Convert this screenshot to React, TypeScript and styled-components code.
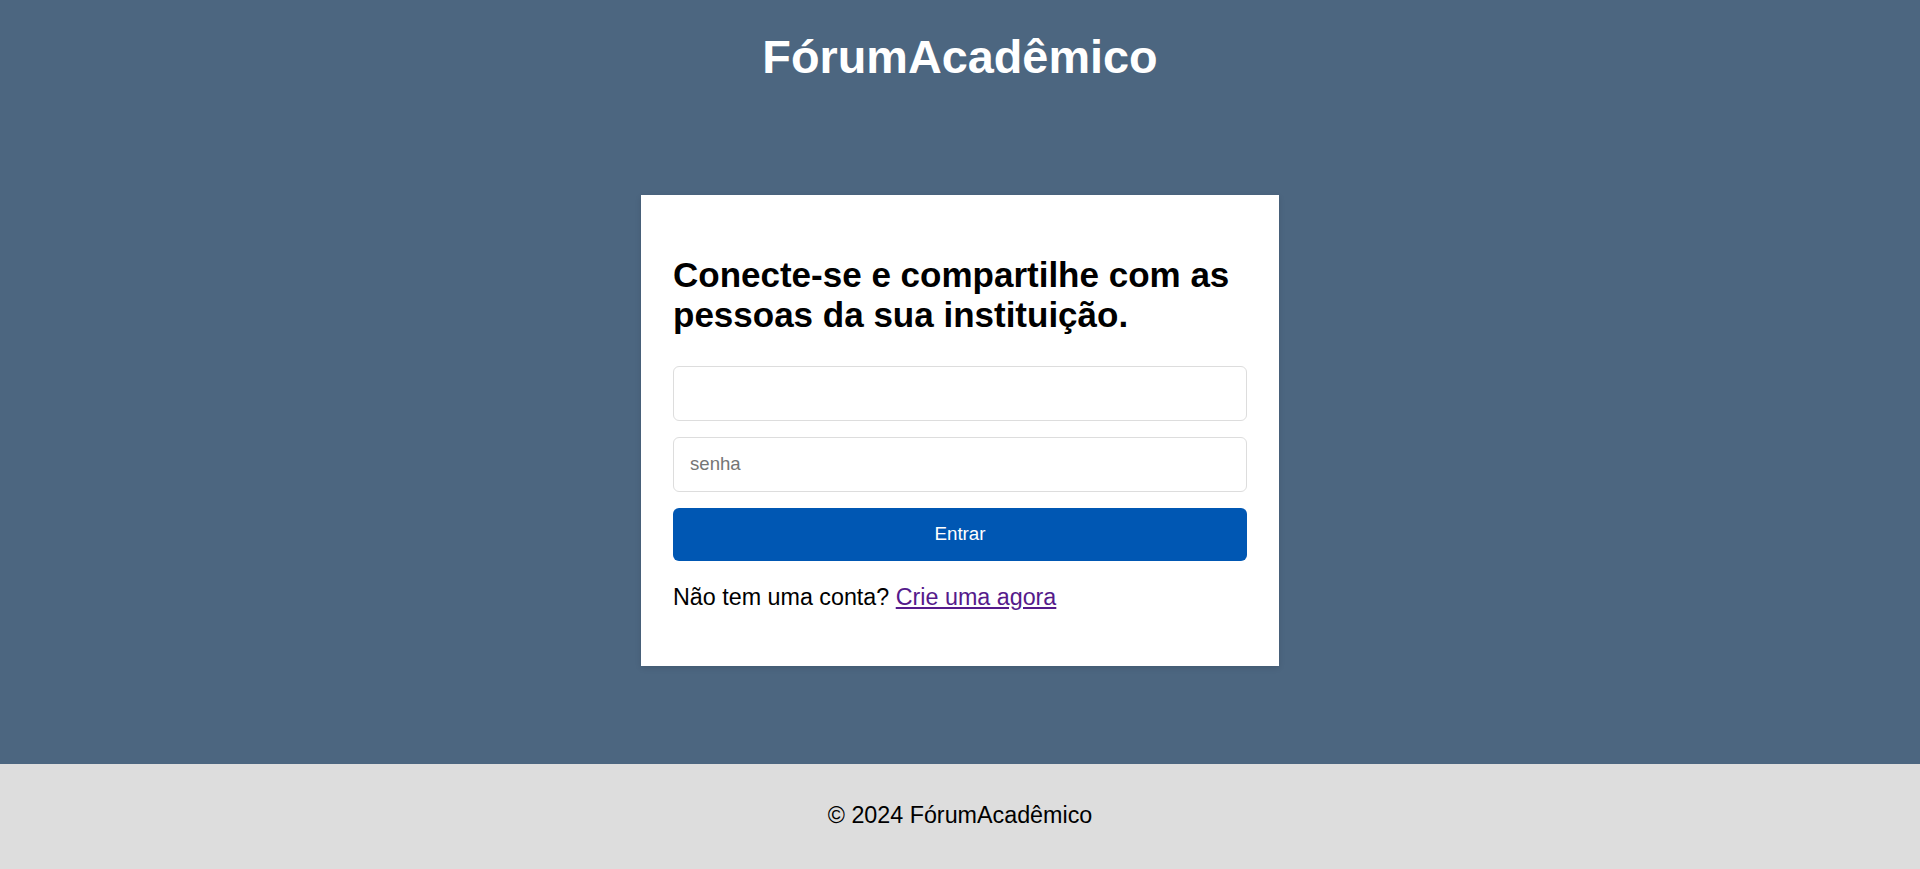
import React from "react";
import styled, { createGlobalStyle } from "styled-components";

const GlobalStyle = createGlobalStyle`
  html, body {
    margin: 0;
    padding: 0;
  }
  body {
    font-family: "Liberation Sans", Arial, sans-serif;
    font-size: 23.3px;
    color: #000;
    background: #4c6680;
  }
  * { box-sizing: border-box; }
`;

const Page = styled.div`
  display: flex;
  flex-direction: column;
  min-height: 869px;
`;

const Header = styled.header`
  display: flex;
  justify-content: center;
  height: 84px;
  padding-top: 31px;
  background: #4c6680;
`;

const Title = styled.h1`
  margin: 0;
  font-size: 46.8px;
  line-height: 53px;
  font-weight: 700;
  color: #ffffff;
`;

const Main = styled.main`
  flex: 1;
  display: flex;
  justify-content: center;
  align-items: flex-start;
  padding: 111px 0 90px;
  background: #4c6680;
`;

const Card = styled.section`
  width: 638px;
  background: #ffffff;
  padding: 60px 32px 32px;
  box-shadow: 0 2px 6px rgba(0, 0, 0, 0.12);
`;

const Heading = styled.h2`
  margin: 0 0 31.6px;
  font-size: 35px;
  line-height: 39.5px;
  font-weight: 700;
  color: #000;
`;

const Form = styled.form`
  display: flex;
  flex-direction: column;
  gap: 16px;
`;

const Input = styled.input`
  width: 100%;
  height: 55px;
  padding: 0 16px;
  border: 1px solid #dddddd;
  border-radius: 6px;
  font-family: "Liberation Sans", Arial, sans-serif;
  font-size: 18.6px;
  color: #000;
  background: #fff;
  outline: none;
  &::placeholder {
    color: #757575;
  }
`;

const Button = styled.button`
  width: 100%;
  height: 53px;
  border: none;
  border-radius: 6px;
  background: #0057b3;
  color: #ffffff;
  font-family: "Liberation Sans", Arial, sans-serif;
  font-size: 18.8px;
  cursor: pointer;
`;

const Note = styled.p`
  margin: 23.8px 0 23px;
  font-size: 23.3px;
  line-height: 26.8px;
`;

const Link = styled.a`
  color: #551a8b;
  text-decoration: underline;
`;

const Footer = styled.footer`
  display: flex;
  align-items: center;
  justify-content: center;
  height: 105px;
  flex-shrink: 0;
  background: #dddddd;
  font-size: 23.3px;
  line-height: 26.8px;
  color: #000;
  padding-bottom: 2px;
`;

export default function App() {
  return (
    <>
      <GlobalStyle />
      <Page>
        <Header>
          <Title>FórumAcadêmico</Title>
        </Header>
        <Main>
          <Card>
            <Heading>Conecte-se e compartilhe com as pessoas da sua instituição.</Heading>
            <Form onSubmit={(e) => e.preventDefault()}>
              <Input type="text" aria-label="usuário" />
              <Input type="password" placeholder="senha" />
              <Button type="submit">Entrar</Button>
            </Form>
            <Note>
              Não tem uma conta? <Link href="#">Crie uma agora</Link>
            </Note>
          </Card>
        </Main>
        <Footer>© 2024 FórumAcadêmico</Footer>
      </Page>
    </>
  );
}
